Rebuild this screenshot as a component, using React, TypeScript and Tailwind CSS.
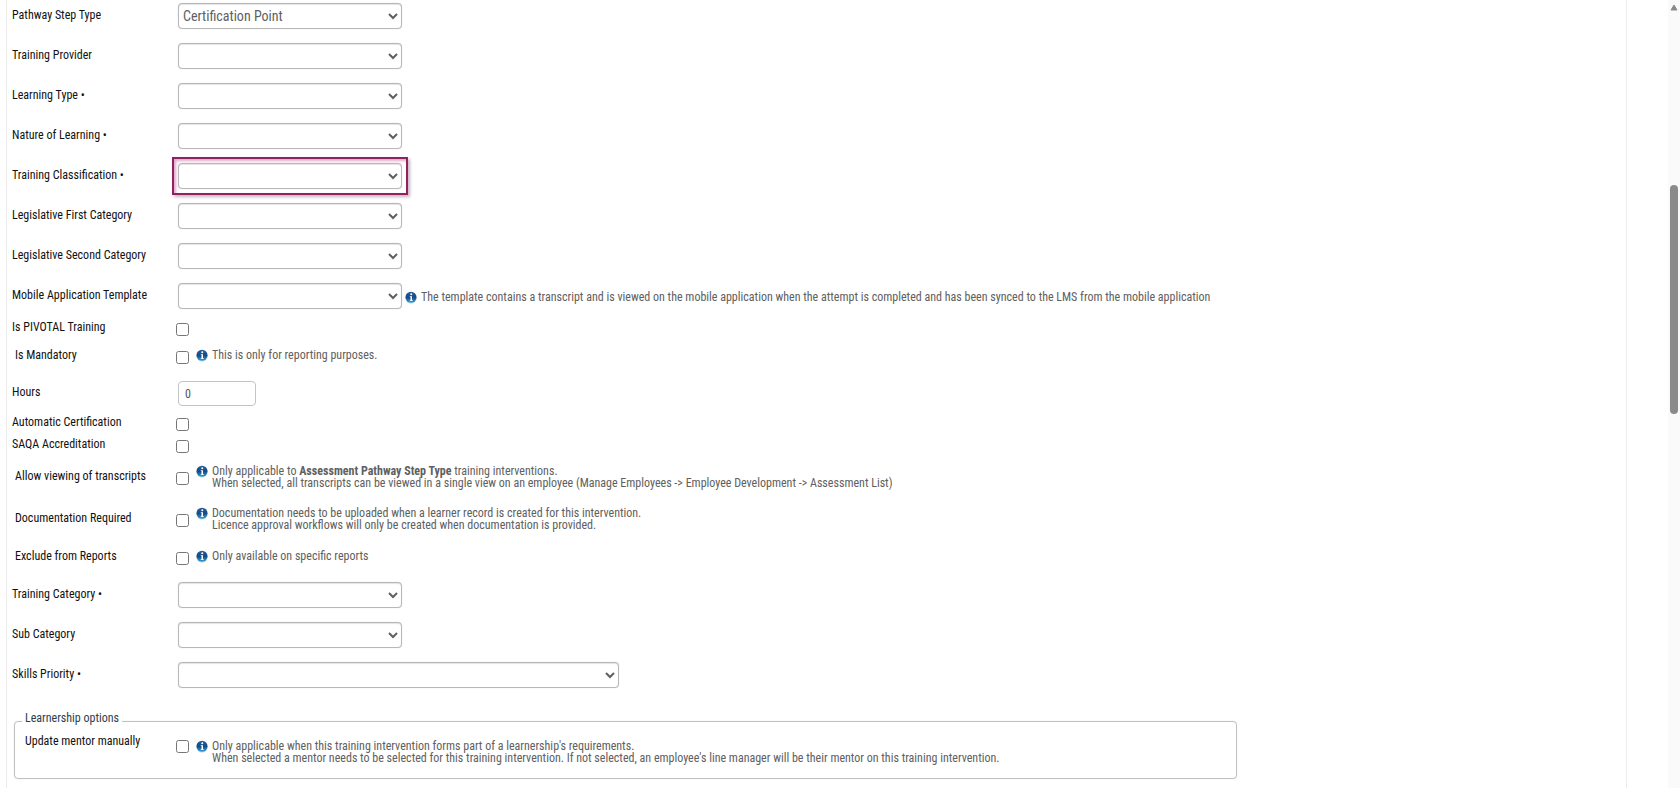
import type { ReactNode } from 'react';

interface RowProps {
  id: string;
  label: string;
  required?: boolean;
  children?: ReactNode;
}

interface SelectRowProps extends RowProps {
  options?: string[];
  wide?: boolean;
  highlighted?: boolean;
}

interface CheckRowProps extends RowProps {
  height: string;
  indent?: boolean;
}

const InfoIcon = () => (
  <svg viewBox="0 0 24 26" className="w-3 h-[13px] shrink-0" aria-hidden="true">
    <defs>
      <linearGradient id="info-fill" x1="0" y1="0" x2="0" y2="1">
        <stop offset="0" stopColor="#2a5f9a" />
        <stop offset="0.5" stopColor="#124a86" />
        <stop offset="1" stopColor="#35a0d6" />
      </linearGradient>
    </defs>
    <circle cx="12" cy="14" r="11.5" fill="#d5dde4" />
    <circle cx="12" cy="12.5" r="11" fill="url(#info-fill)" />
    <circle cx="12.5" cy="6.5" r="2" fill="#fff" />
    <path d="M9.5 10.5h4.5v8h1.5v1.5h-6v-1.5h1.5v-6.5h-1.5z" fill="#fff" />
  </svg>
);

const Hint = ({ children }: { children: ReactNode }) => (
  <div className="flex items-start gap-1 text-[#606060]">
    <InfoIcon />
    <p>{children}</p>
  </div>
);

const SelectRow = ({ id, label, required, options = [''], wide, highlighted, children }: SelectRowProps) => (
  <div className="flex items-center">
    <label htmlFor={id} className="w-[166px] shrink-0 pb-[2px]">
      {label}
      {required && ' •'}
    </label>
    <div className="relative">
      <select
        id={id}
        className={`block h-[26px] rounded border border-[#b8b8b8] bg-white text-sm text-[#606060] shadow-[0_0_1px_#ccc,inset_0_1px_1px_#e4e4e4] ${
          wide ? 'w-[441px]' : 'w-[224px]'
        }`}
      >
        {options.map((option) => (
          <option key={option}>{option}</option>
        ))}
      </select>
      {highlighted && (
        <div className="pointer-events-none absolute -inset-x-[6px] -inset-y-[6px] border-2 border-[#8f2362] shadow-[2px_2px_3px_#c9b3c0,inset_2px_2px_3px_#e0a8c8]" />
      )}
    </div>
    {children && <div className="ml-[3px] pt-[3px]">{children}</div>}
  </div>
);

const CheckRow = ({ id, label, height, indent, children }: CheckRowProps) => (
  <div className={`flex items-center ${height}`}>
    <label htmlFor={id} className={`w-[164px] shrink-0 pb-1 ${indent ? 'pl-[3px]' : ''}`}>
      {label}
    </label>
    <input id={id} type="checkbox" className="w-[13px] h-[13px] shrink-0" />
    {children && <div className="ml-[7px] pb-[3px]">{children}</div>}
  </div>
);

export default function App() {
  return (
    <div className="flex min-h-screen bg-white font-['Roboto_Condensed',Roboto,sans-serif] text-xs leading-3 text-[#111]">
      <main className="ml-[6px] mr-[41px] grow border-x border-[#ececec] pl-[5px] pt-[3px]">
        <form>
          <div className="flex flex-col gap-[14px]">
            <SelectRow id="step-type" label="Pathway Step Type" options={['Certification Point']} />
            <SelectRow id="provider" label="Training Provider" />
            <SelectRow id="learning-type" label="Learning Type" required />
            <SelectRow id="nature" label="Nature of Learning" required />
            <SelectRow id="classification" label="Training Classification" required highlighted />
            <SelectRow id="first-category" label="Legislative First Category" />
            <SelectRow id="second-category" label="Legislative Second Category" />
            <SelectRow id="mobile-template" label="Mobile Application Template">
              <Hint>
                The template contains a transcript and is viewed on the mobile application when the attempt is
                completed and has been synced to the LMS from the mobile application
              </Hint>
            </SelectRow>
          </div>

          <div className="mt-[6px]">
            <CheckRow id="pivotal" label="Is PIVOTAL Training" height="h-7" />
            <CheckRow id="mandatory" label="Is Mandatory" height="h-7" indent>
              <Hint>This is only for reporting purposes.</Hint>
            </CheckRow>
          </div>

          <div className="mt-[10px] flex items-center">
            <label htmlFor="hours" className="w-[166px] shrink-0 pb-1">
              Hours
            </label>
            <input
              id="hours"
              type="text"
              defaultValue="0"
              className="h-[25px] w-[78px] rounded border border-[#c4c4c4] px-[6px] text-[#555]"
            />
          </div>

          <div className="mt-[7px]">
            <CheckRow id="auto-cert" label="Automatic Certification" height="h-[22px]" />
            <CheckRow id="saqa" label="SAQA Accreditation" height="h-[22px]" />
            <CheckRow id="transcripts" label="Allow viewing of transcripts" height="h-[42px]" indent>
              <Hint>
                Only applicable to <b>Assessment Pathway Step Type</b> training interventions.
                <br />
                When selected, all transcripts can be viewed in a single view on an employee (Manage Employees -&gt;
                Employee Development -&gt; Assessment List)
              </Hint>
            </CheckRow>
            <CheckRow id="documentation" label="Documentation Required" height="h-[42px]" indent>
              <Hint>
                Documentation needs to be uploaded when a learner record is created for this intervention.
                <br />
                Licence approval workflows will only be created when documentation is provided.
              </Hint>
            </CheckRow>
            <CheckRow id="exclude" label="Exclude from Reports" height="h-[34px]" indent>
              <Hint>Only available on specific reports</Hint>
            </CheckRow>
          </div>

          <div className="mt-[7px] flex flex-col gap-[14px]">
            <SelectRow id="category" label="Training Category" required />
            <SelectRow id="sub-category" label="Sub Category" />
            <SelectRow id="skills" label="Skills Priority" required wide />
          </div>

          <fieldset className="ml-[2px] mt-6 w-[1223px] max-w-full rounded border border-[#c0c0c0] pb-4 pl-[10px] shadow-[0_0_1px_#ccc]">
            <legend className="-ml-[3px] px-[3px] pb-[6px] text-[#2c3e50]">Learnership options</legend>
            <div className="flex h-8 items-center">
              <label htmlFor="mentor" className="w-[151px] shrink-0 pb-[10px]">
                Update mentor manually
              </label>
              <input id="mentor" type="checkbox" className="w-[13px] h-[13px] shrink-0" />
              <div className="ml-[7px] pt-3">
                <Hint>
                  Only applicable when this training intervention forms part of a learnership's requirements.
                  <br />
                  When selected a mentor needs to be selected for this training intervention. If not selected, an
                  employee's line manager will be their mentor on this training intervention.
                </Hint>
              </div>
            </div>
          </fieldset>
        </form>
      </main>

      {/* scroll track */}
      <div className="flex w-3 shrink-0 flex-col items-center bg-[#fafafa] pt-1">
        <svg viewBox="0 0 8 7" className="w-2 h-[7px]" aria-hidden="true">
          <path d="M4 1 7 6H1z" fill="#8a8a8a" stroke="#8a8a8a" strokeLinejoin="round" />
        </svg>
        <div className="mt-[174px] h-[229px] w-2 rounded-full bg-[#8a8a8a]" />
      </div>
    </div>
  );
}
